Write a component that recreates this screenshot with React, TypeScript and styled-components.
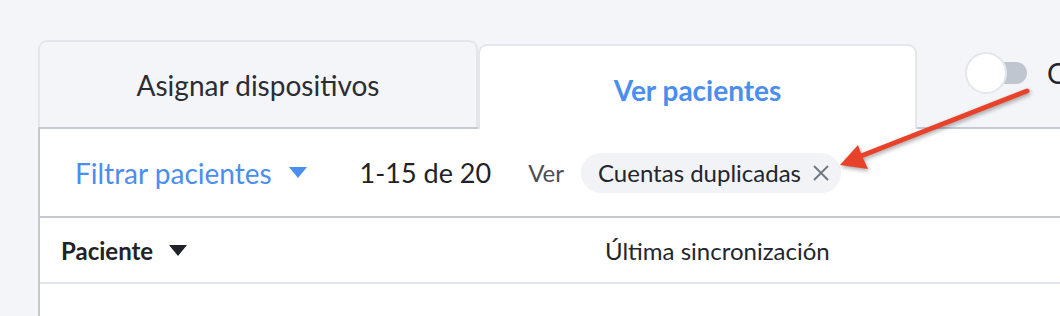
import styled, { createGlobalStyle } from "styled-components"

const GlobalStyle = createGlobalStyle`
    html, body {
        margin: 0;
        padding: 0;
        background-color: #F4F5F8;
        font-family: Lato, "Open Sans", sans-serif;
        overflow: hidden;
    }
    * { box-sizing: border-box; }
`

function App() {
    return (
        <Page>
            <GlobalStyle />
            <TabsRow>
                <Tab>Asignar dispositivos</Tab>
                <Tab active>Ver pacientes</Tab>
                <ToggleWrap>
                    <Track>
                        <Knob />
                    </Track>
                    <ToggleLabel>Cuentas duplicadas</ToggleLabel>
                </ToggleWrap>
            </TabsRow>

            <Panel>
                <FilterRow>
                    <FilterButton>
                        Filtrar pacientes
                        <Caret color="#4A8EF0" />
                    </FilterButton>
                    <Count>1-15 de 20</Count>
                    <ViewLabel>Ver</ViewLabel>
                    <Chip>
                        Cuentas duplicadas
                        <svg width="18" height="18" viewBox="0 0 18 18">
                            <path d="M2 2 L16 16 M16 2 L2 16" stroke="#6F7680" strokeWidth="1.8" fill="none" />
                        </svg>
                    </Chip>
                </FilterRow>

                <HeaderRow>
                    <PatientCol>
                        Paciente
                        <Caret color="#1F2228" />
                    </PatientCol>
                    <SyncCol>Última sincronización</SyncCol>
                </HeaderRow>
            </Panel>

            {/* annotation arrow drawn over the screenshot */}
            <Arrow width="1060" height="316" viewBox="0 0 1060 316">
                <line x1="1027" y1="91" x2="861" y2="156" stroke="#E8432A" strokeWidth="5" strokeLinecap="round" />
                <polygon points="840,165 858,145 862,156 868,169" fill="#E8432A" />
            </Arrow>
        </Page>
    );
}

function Caret({ color }: { color: string }) {
    return (
        <svg width="18" height="11" viewBox="0 0 18 11">
            <polygon points="0,0 18,0 9,11" fill={color} />
        </svg>
    )
}

const Page = styled.div`
    position: relative;
    width: 1060px;
    height: 316px;
    padding: 40px 0 0 38px;
    overflow: hidden;
`

const TabsRow = styled.div`
    display: flex;
    align-items: flex-end;
    height: 87px;
    position: relative;
    z-index: 2;
`

const Tab = styled.div<{ active?: boolean }>`
    flex-shrink: 0;
    width: ${p => p.active ? "439px" : "440px"};
    height: ${p => p.active ? "85px" : "87px"};
    margin-bottom: ${p => p.active ? "-2px" : "0"};
    display: flex;
    align-items: center;
    justify-content: center;
    padding-top: ${p => p.active ? "4px" : "0"};
    border: 2px solid #E3E6EC;
    border-bottom: none;
    border-radius: 9px 9px 0 0;
    background-color: ${p => p.active ? "#FFFFFF" : "#F4F5F8"};
    color: ${p => p.active ? "#4A8EF0" : "#2A2D34"};
    font-size: 28px;
    font-weight: ${p => p.active ? 700 : 400};
    white-space: nowrap;
`

const ToggleWrap = styled.div`
    flex-shrink: 0;
    align-self: flex-start;
    margin-top: 16px;
    margin-left: 58px;
    display: flex;
    align-items: center;
    column-gap: 20px;
    white-space: nowrap;
`

const Track = styled.div`
    position: relative;
    width: 52px;
    height: 22px;
    border-radius: 11px;
    background-color: #C0C6D0;
`

const Knob = styled.div`
    position: absolute;
    left: -10px;
    top: -10px;
    width: 42px;
    height: 42px;
    border-radius: 50%;
    background-color: #FFFFFF;
    border: 2px solid #E3E6EC;
`

const ToggleLabel = styled.span`
    font-size: 28px;
    color: #23262D;
`

const Panel = styled.div`
    background-color: #FFFFFF;
    border-top: 2px solid #C5CAD3;
    border-left: 2px solid #C5CAD3;
    height: 300px;
`

const FilterRow = styled.div`
    height: 89px;
    display: flex;
    align-items: center;
    padding-left: 35px;
    border-bottom: 2px solid #C5CAD3;
`

const FilterButton = styled.div`
    display: flex;
    align-items: center;
    column-gap: 17px;
    font-size: 28px;
    color: #4A8EF0;
`

const Count = styled.div`
    margin-left: 53px;
    font-size: 27px;
    color: #1F2228;
`

const ViewLabel = styled.div`
    margin-left: 37px;
    font-size: 24px;
    color: #4A4E56;
`

const Chip = styled.div`
    margin-left: 17px;
    height: 40px;
    padding: 0 11px 0 17px;
    border-radius: 20px;
    background-color: #F1F3F7;
    display: flex;
    align-items: center;
    column-gap: 11px;
    font-size: 24px;
    color: #23262D;
`

const HeaderRow = styled.div`
    height: 66px;
    display: flex;
    align-items: center;
    padding-left: 21px;
    border-bottom: 2px solid #E1E4EA;
`

const PatientCol = styled.div`
    width: 544px;
    display: flex;
    align-items: center;
    column-gap: 16px;
    font-size: 24px;
    font-weight: 700;
    color: #1F2228;
`

const SyncCol = styled.div`
    font-size: 24px;
    color: #23262D;
`

const Arrow = styled.svg`
    position: absolute;
    left: 0;
    top: 0;
    z-index: 3;
    pointer-events: none;
    filter: drop-shadow(1px 2px 2px rgba(0, 0, 0, 0.35));
`

export default App;
